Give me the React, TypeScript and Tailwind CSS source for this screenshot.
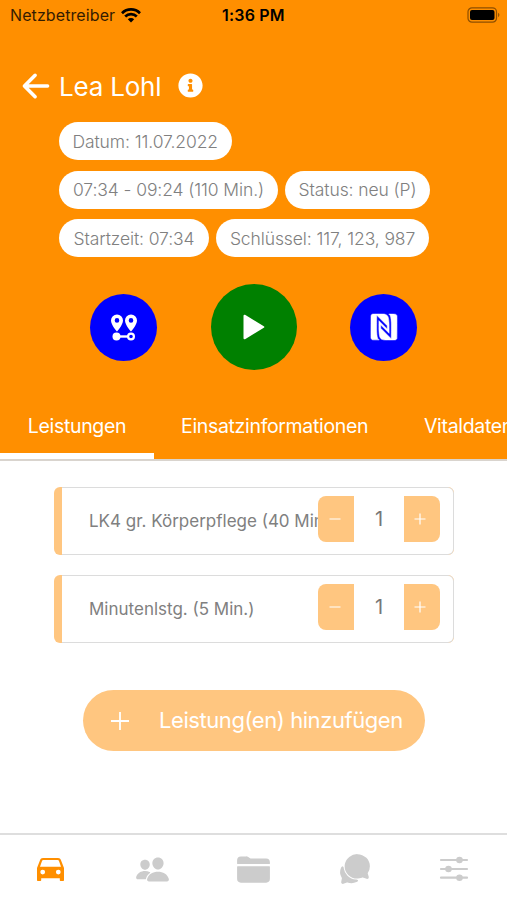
import type { ReactNode } from "react";
import { IoArrowBack, IoPeople, IoFolder, IoChatbubbles } from "react-icons/io5";
import { FaInfoCircle } from "react-icons/fa";
import { SiNfc } from "react-icons/si";

function Chip({ children, className }: { children: ReactNode; className: string }) {
  return (
    <span className={`flex h-[38px] shrink-0 items-center justify-center whitespace-nowrap rounded-full bg-white pt-[2px] text-[17.5px] font-light tracking-[-0.1px] text-[#808080] ${className}`}>
      {children}
    </span>
  );
}

function StatusBar() {
  return (
    <div className="flex h-[30px] items-center text-black">
      <div className="flex w-[222px] items-center pl-[10px]">
        <span className="whitespace-nowrap text-[16px] tracking-[0.1px] opacity-80">Netzbetreiber</span>
        <svg className="ml-[6px] h-[15px] w-[20px]" viewBox="0 0 20 15" fill="none" stroke="currentColor" strokeWidth="2.7">
          <path d="M1 5.2a12.7 12.7 0 0 1 18 0" />
          <path d="M4.2 8.5a8.2 8.2 0 0 1 11.6 0" />
          <path d="M10 14.5 6.8 11.3a4.5 4.5 0 0 1 6.4 0Z" fill="currentColor" stroke="none" />
        </svg>
      </div>
      <span className="whitespace-nowrap text-[16px] font-semibold tracking-[0.2px]">1:36 PM</span>
      <svg className="ml-auto mr-[6px] h-[16px] w-[34px]" viewBox="0 0 34 16">
        <rect x="1" y="0.8" width="28.5" height="14.4" rx="4" fill="none" stroke="#000" strokeOpacity="0.45" strokeWidth="1.2" />
        <rect x="3" y="3" width="24.5" height="10" rx="2" />
        <path d="M31.2 5.8q2.4 2.2 0 4.4Z" fillOpacity="0.5" />
      </svg>
    </div>
  );
}

function RouteIcon() {
  return (
    <svg className="h-[27px] w-[28px]" viewBox="0 0 28 27" fill="none">
      <path fill="#fff" fillRule="evenodd" d="M7 .5a6 6 0 0 0-6 6C1 11 7 17.500 7 17.500s6-6.500 6-11a6 6 0 0 0-6-6Zm0 3.600a2.300 2.300 0 1 1 0 4.600 2.300 2.300 0 0 1 0-4.600ZM21 .5a6 6 0 0 0-6 6C15 11 21 17.500 21 17.500s6-6.500 6-11a6 6 0 0 0-6-6Zm0 3.600a2.300 2.300 0 1 1 0 4.600 2.300 2.300 0 0 1 0-4.600Z" />
      <circle cx="6.500" cy="22.500" r="4" fill="#fff" />
      <path d="M10 22.500h8" stroke="#fff" strokeWidth="2.400" />
      <circle cx="21" cy="22.500" r="2.900" stroke="#fff" strokeWidth="2.200" />
    </svg>
  );
}

function PlayIcon() {
  return (
    <svg className="h-[26px] w-[22px]" viewBox="0 0 22 26" fill="#fff" stroke="#fff" strokeWidth="2" strokeLinejoin="round">
      <path d="M1.500 1.700v22.600L20.300 13Z" />
    </svg>
  );
}

function CarIcon() {
  return (
    <svg className="h-[23px] w-[27px]" viewBox="0 0 27 23" fill="#ff8f00">
      <path fillRule="evenodd" d="M6 0h15c1.600 0 2.500.8 3 2.200L27 10v12c0 .6-.4 1-1 1h-2.200c-.6 0-1-.4-1-1v-1.700H4.200V22c0 .6-.4 1-1 1H1c-.6 0-1-.4-1-1V10l3-7.800C3.500.8 4.400 0 6 0Zm.4 1.900c-.7 0-1.100.3-1.300.9L3 8.700h21l-2.100-5.900c-.2-.6-.6-.9-1.300-.9ZM5.700 11.700a2.400 2.400 0 1 0 0 4.800 2.400 2.400 0 0 0 0-4.800Zm15.600 0a2.400 2.400 0 1 0 0 4.800 2.400 2.400 0 0 0 0-4.800Z" />
    </svg>
  );
}

function SlidersIcon() {
  return (
    <svg className="h-[26px] w-[30px]" viewBox="0 0 30 26" fill="currentColor" stroke="currentColor" strokeWidth="2.200" strokeLinecap="round">
      <path d="M2 4h26M2 13h26M2 21.700h26" />
      <g stroke="none">
        <circle cx="20.500" cy="4" r="3.300" />
        <circle cx="9.500" cy="13" r="3.300" />
        <circle cx="20.500" cy="21.700" r="3.300" />
      </g>
    </svg>
  );
}

function ServiceCard({ label }: { label: string }) {
  return (
    <div className="flex h-[68px] w-[400px] overflow-hidden rounded-[6px] bg-[#ffc680]">
      <div className="ml-[8px] flex flex-1 border border-l-0 border-[#dcdcdc] bg-white rounded-r-[6px]">
        <div className="ml-[27px] w-[229px] overflow-hidden whitespace-nowrap pt-[21px] text-[17px] leading-[24px] text-[#808080]">{label}</div>
        <div className="mt-[8px] flex h-[46px] w-[122px] shrink-0 items-center justify-between text-white">
          <button className="flex h-[46px] w-[36px] items-center justify-center rounded-l-[8px] bg-[#ffc680] pr-[2px]">
            <svg className="h-3 w-3" viewBox="0 0 12 12" stroke="currentColor" strokeWidth="1.200"><path d="M.5 6h11" /></svg>
          </button>
          <span className="text-[20px] text-[#777]">1</span>
          <button className="flex h-[46px] w-[36px] items-center justify-center rounded-r-[8px] bg-[#ffc680] pr-[4px]">
            <svg className="h-3 w-3" viewBox="0 0 12 12" stroke="currentColor" strokeWidth="1.200"><path d="M.5 6h11M6 .5v11" /></svg>
          </button>
        </div>
      </div>
    </div>
  );
}

export default function App() {
  return (
    <div className="flex h-[900px] w-[507px] flex-col overflow-hidden bg-white font-['Inter',sans-serif]">
      <header className="flex h-[461px] shrink-0 flex-col border-b-2 border-[#d9d4ce] bg-[#ff8f00]">
        <StatusBar />
        <div className="mt-[38px] flex h-[36px] items-center pl-[17px] text-white">
          <IoArrowBack className="h-[38px] w-[38px]" />
          <h1 className="ml-[4px] w-[119px] whitespace-nowrap text-[26px] font-normal tracking-[-0.2px]">Lea Lohl</h1>
          <FaInfoCircle className="mb-[2px] h-[25px] w-[25px]" />
        </div>
        <div className="mt-[18px] flex flex-col gap-[10.5px] pl-[59px]">
          <div className="flex"><Chip className="w-[172.5px]">Datum: 11.07.2022</Chip></div>
          <div className="flex gap-[7px]">
            <Chip className="w-[219px]">07:34 - 09:24 (110 Min.)</Chip>
            <Chip className="w-[145px]">Status: neu (P)</Chip>
          </div>
          <div className="flex gap-[7px]">
            <Chip className="w-[150px]">Startzeit: 07:34</Chip>
            <Chip className="w-[213px]">Schlüssel: 117, 123, 987</Chip>
          </div>
        </div>
        <div className="mt-[27px] flex h-[86px] items-center justify-between pl-[90px] pr-[90px] text-white">
          <button className="flex h-[67px] w-[67px] items-center justify-center rounded-full bg-[#0000ff]"><RouteIcon /></button>
          <button className="flex h-[86px] w-[86px] items-center justify-center rounded-full bg-[#008000]"><PlayIcon /></button>
          <button className="flex h-[67px] w-[67px] items-center justify-center rounded-full bg-[#0000ff]">
            <SiNfc className="h-[26px] w-[26px] overflow-visible" stroke="#fff" strokeWidth="0.5" />
          </button>
        </div>
        <nav className="mt-auto flex h-[65px] overflow-hidden whitespace-nowrap text-[19.5px] tracking-[-0.33px] text-white">
          <div className="flex w-[154px] shrink-0 justify-center border-b-[6px] border-white pt-[18px] leading-[28px]">Leistungen</div>
          <div className="w-[242px] shrink-0 pl-[27px] pt-[18px] leading-[28px]">Einsatzinformationen</div>
          <div className="shrink-0 pl-[28px] pt-[18px] leading-[28px]">Vitaldaten</div>
        </nav>
      </header>
      <main className="flex min-h-0 flex-1 flex-col pl-[54px] pt-[26px]">
        <div className="flex flex-col gap-5">
          <ServiceCard label="LK4 gr. Körperpflege (40 Min.)" />
          <ServiceCard label="Minutenlstg. (5 Min.)" />
        </div>
        <button className="ml-[29px] mt-[47px] flex h-[61px] w-[342px] items-center whitespace-nowrap rounded-full bg-[#ffc680] pl-[28px] text-[22px] tracking-[-0.43px] text-white">
          <svg className="h-[18px] w-[18px]" viewBox="0 0 18 18" stroke="currentColor" strokeWidth="1.800"><path d="M0 9h18M9 0v18" /></svg>
          <span className="ml-[30px]">Leistung(en) hinzufügen</span>
        </button>
      </main>
      <footer className="flex h-[67px] shrink-0 items-center border-t-2 border-[#dedede] pt-[3px] text-[#ccc]">
        <div className="flex w-[101px] justify-center"><CarIcon /></div>
        <div className="flex w-[103px] justify-center"><IoPeople className="h-[35px] w-[35px]" /></div>
        <div className="flex w-[98px] justify-center"><IoFolder className="h-[35px] w-[35px]" /></div>
        <div className="flex w-[106px] justify-center"><IoChatbubbles className="h-[34px] w-[34px]" /></div>
        <div className="flex w-[92px] justify-center"><SlidersIcon /></div>
      </footer>
    </div>
  );
}
